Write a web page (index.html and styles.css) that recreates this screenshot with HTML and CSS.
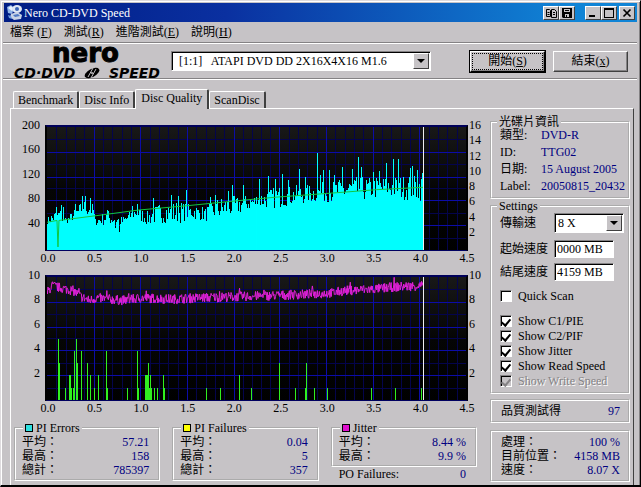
FILE: index.html
```html
<!DOCTYPE html>
<html lang="zh-Hant">
<head>
  <meta charset="UTF-8" />
  <title>Nero CD-DVD Speed</title>
  <link rel="stylesheet" href="styles.css">
</head>
<body>

<div class="window">
  <header class="titlebar">
    <svg class="app-icon" width="17" height="17" viewBox="0 0 17 17">
      <path d="M1 3l4-2 3 3-2 6-4-1z" fill="#8fb4e8"/>
      <path d="M2 4l3-2 2 2-1 3z" fill="#e8f2ff"/>
      <ellipse cx="11" cy="5" rx="5" ry="4" fill="#dfe8f5"/>
      <circle cx="11" cy="5" r="2" fill="#3d66b8"/>
      <path d="M5 10l6-2 5 3-1 4-7 1-4-3z" fill="#c9d4e6"/>
      <path d="M7 11l5-1 2 2-5 1z" fill="#4f79c4"/>
      <path d="M2 11l3 1 1 3-3-1z" fill="#6d9de0"/>
    </svg>
    <span class="title">Nero CD-DVD Speed</span>
    <div class="title-buttons">
      <button class="tb" aria-label="Copy">
        <svg width="11" height="10" viewBox="0 0 11 10" fill="none" stroke="#000">
          <path d="M.5 1.5h3l1 1v6h-4zM5.5 1.5h3l2 2v6h-5zM1.5 4.5h2M1.5 6.5h2M7 4.5h2M7 6.5h2"/>
        </svg>
      </button>
      <button class="tb" aria-label="Save">
        <svg width="10" height="10" viewBox="0 0 10 10">
          <path d="M0 0h10v10H1L0 9z" fill="#000"/>
          <path d="M2 1h6v3H2zM3 6h4v3H3z" fill="#c6c3c6"/>
          <path d="M3 2h4v1H3zM4 7h1v2H4z" fill="#000"/>
        </svg>
      </button>
    </div>
    <div class="title-buttons">
      <button class="tb" aria-label="Minimize">
        <svg width="10" height="10" viewBox="0 0 10 10"><path d="M1 7h6v2H1z"/></svg>
      </button>
      <button class="tb" aria-label="Maximize">
        <svg width="10" height="10" viewBox="0 0 10 10"><path d="M0 0h10v10H0zM1 2v7h8V2z" fill-rule="evenodd"/></svg>
      </button>
      <button class="tb close" aria-label="Close">
        <svg width="10" height="10" viewBox="0 0 10 10"><path d="M1.5 1.5l7 7M8.5 1.5l-7 7" stroke="#000" stroke-width="1.7"/></svg>
      </button>
    </div>
  </header>

  <nav class="menu">
    <a href="#">檔案 (<u>F</u>)</a>
    <a href="#">測試(<u>R</u>)</a>
    <a href="#">進階測試(<u>E</u>)</a>
    <a href="#">說明(<u>H</u>)</a>
  </nav>

  <div class="toolbar">
    <div class="logo">
      <div class="logo-nero">nero</div>
      <div class="logo-speed">
        <span>CD·DVD</span>
        <svg width="18" height="12" viewBox="0 0 18 12">
          <ellipse cx="9" cy="6" rx="8" ry="4" transform="rotate(-28 9 6)" fill="#000"/>
          <path d="M5 10l5-9M8 11l5-9" stroke="#c6c3c6" stroke-width="1"/>
          <circle cx="9" cy="6" r="1" fill="#c6c3c6"/>
        </svg>
        <span>SPEED</span>
      </div>
    </div>
    <div class="combo drive">
      <select aria-label="Drive"><option>[1:1] &nbsp; ATAPI DVD DD 2X16X4X16 M1.6</option></select>
      <span class="arrow"></span>
    </div>
    <div class="actions">
      <button class="btn default"><span>開始(<u>S</u>)</span></button>
      <button class="btn"><span>結束(<u>x</u>)</span></button>
    </div>
  </div>

  <div class="tabs" role="tablist">
    <button class="tab" role="tab">Benchmark</button>
    <button class="tab" role="tab">Disc Info</button>
    <button class="tab active" role="tab" aria-selected="true">Disc Quality</button>
    <button class="tab" role="tab">ScanDisc</button>
  </div>

  <main class="page">
    <section class="left">
      <div class="chart">
        <div class="axis-y axis-left">
          <span>200</span><span>160</span><span>120</span><span>80</span><span>40</span><span></span>
        </div>
        <svg class="plot" id="pie-plot" viewBox="0 0 420 124" preserveAspectRatio="none"></svg>
        <div class="axis-y axis-right">
          <span>16</span><span>14</span><span>12</span><span>10</span><span>8</span><span>6</span><span>4</span><span>2</span><span></span>
        </div>
        <div class="axis-x">
          <span>0.0</span><span>0.5</span><span>1.0</span><span>1.5</span><span>2.0</span><span>2.5</span><span>3.0</span><span>3.5</span><span>4.0</span><span>4.5</span>
        </div>
      </div>

      <div class="chart">
        <div class="axis-y axis-left">
          <span>10</span><span>8</span><span>6</span><span>4</span><span>2</span><span></span>
        </div>
        <svg class="plot" id="pif-plot" viewBox="0 0 420 124" preserveAspectRatio="none"></svg>
        <div class="axis-y axis-right">
          <span>10</span><span>8</span><span>6</span><span>4</span><span>2</span><span></span>
        </div>
        <div class="axis-x">
          <span>0.0</span><span>0.5</span><span>1.0</span><span>1.5</span><span>2.0</span><span>2.5</span><span>3.0</span><span>3.5</span><span>4.0</span><span>4.5</span>
        </div>
      </div>

      <div class="stats">
        <fieldset class="stat">
          <legend><i class="swatch cyan"></i>PI Errors</legend>
          <dl>
            <div><dt>平均：</dt><dd>57.21</dd></div>
            <div><dt>最高：</dt><dd>158</dd></div>
            <div><dt>總計：</dt><dd>785397</dd></div>
          </dl>
        </fieldset>
        <fieldset class="stat">
          <legend><i class="swatch yellow"></i>PI Failures</legend>
          <dl>
            <div><dt>平均：</dt><dd>0.04</dd></div>
            <div><dt>最高：</dt><dd>5</dd></div>
            <div><dt>總計：</dt><dd>357</dd></div>
          </dl>
        </fieldset>
        <div class="jitter">
          <fieldset class="stat">
            <legend><i class="swatch magenta"></i>Jitter</legend>
            <dl>
              <div><dt>平均：</dt><dd>8.44 %</dd></div>
              <div><dt>最高：</dt><dd>9.9 %</dd></div>
            </dl>
          </fieldset>
          <dl class="po">
            <div><dt>PO Failures:</dt><dd>0</dd></div>
          </dl>
        </div>
      </div>
    </section>

    <aside class="right">
      <fieldset class="info">
        <legend>光碟片資訊</legend>
        <dl>
          <dt>類型:</dt><dd>DVD-R</dd>
          <dt>ID:</dt><dd>TTG02</dd>
          <dt>日期:</dt><dd>15 August 2005</dd>
          <dt>Label:</dt><dd>20050815_20432</dd>
        </dl>
      </fieldset>

      <fieldset class="settings">
        <legend>Settings</legend>
        <div class="field">
          <label for="speed">傳輸速</label>
          <div class="combo">
            <select id="speed"><option>8 X</option></select>
            <span class="arrow"></span>
          </div>
        </div>
        <div class="field">
          <label for="start">起始速度</label>
          <input type="text" id="start" value="0000 MB" />
        </div>
        <div class="field">
          <label for="end">結尾速度</label>
          <input type="text" id="end" value="4159 MB" />
        </div>
        <label class="check quick"><input type="checkbox" /> <span>Quick Scan</span></label>
        <label class="check"><input type="checkbox" checked /> <span>Show C1/PIE</span></label>
        <label class="check"><input type="checkbox" checked /> <span>Show C2/PIF</span></label>
        <label class="check"><input type="checkbox" checked /> <span>Show Jitter</span></label>
        <label class="check"><input type="checkbox" checked /> <span>Show Read Speed</span></label>
        <label class="check off"><input type="checkbox" checked disabled /> <span>Show Write Speed</span></label>
      </fieldset>

      <dl class="box score">
        <div><dt>品質測試得</dt><dd>97</dd></div>
      </dl>

      <dl class="box progress">
        <div><dt>處理：</dt><dd>100 %</dd></div>
        <div><dt>目前位置：</dt><dd>4158 MB</dd></div>
        <div><dt>速度：</dt><dd>8.07 X</dd></div>
      </dl>
    </aside>
  </main>
</div>

<script src="charts.js"></script>
</body>
</html>
```

FILE: styles.css
```css
* {
  box-sizing: border-box;
}

body {
  margin: 0;
  background: #c6c3c6;
  color: #000;
  font-family: "Liberation Serif", "Noto Sans CJK TC", serif;
  font-size: 12px;
  line-height: 14px;
}

button, input, select {
  font: inherit;
  color: inherit;
}

dl, dd {
  margin: 0;
}

dd {
  color: #000080;
}

fieldset {
  min-width: 0;
  margin: 0;
  border: 2px groove #fff;
}

legend {
  padding: 0 2px;
  height: 14px;
}

.window {
  min-height: 100vh;
  padding: 2px 3px 0 2px;
  border: 1px solid #dedbde;
  border-right-color: #000;
  border-bottom: 2px solid #000;
  box-shadow: inset 1px 1px #fff, inset -1px 0 #848284;
}

/* Title bar */
.titlebar {
  display: flex;
  align-items: center;
  height: 19px;
  margin-left: 1px;
  padding: 0 2px;
  color: #fff;
  background: linear-gradient(90deg, #001c84, #0a30a0 35%, #1084d6 90%);
}

.title {
  flex: 1;
  margin-left: 1px;
}

.title-buttons {
  display: flex;
  margin-left: 10px;
}

.tb {
  display: flex;
  align-items: center;
  justify-content: center;
  width: 16px;
  height: 14px;
  padding: 0;
  background: #c6c3c6;
  border: 1px solid;
  border-color: #fff #404040 #404040 #fff;
}

.close {
  margin-left: 2px;
}

/* Menu */
.menu {
  display: flex;
  gap: 12px;
  padding: 2px 7px;
  height: 21px;
  line-height: 16px;
  border-bottom: 1px solid #848284;
}

.menu a {
  color: #000;
  text-decoration: none;
}

/* Toolbar */
.toolbar {
  display: flex;
  align-items: center;
  height: 36px;
  padding: 0 9px 0 11px;
  border-top: 1px solid #fff;
  border-bottom: 1px solid #848284;
  box-shadow: 0 1px #fff;
}

.logo {
  width: 146px;
  font-family: "DejaVu Sans", sans-serif;
  font-weight: bold;
}

.logo-nero {
  height: 24px;
  margin-left: 38px;
  font-size: 26px;
  line-height: 20px;
  -webkit-text-stroke: 1px #000;
}

.logo-speed {
  display: flex;
  align-items: center;
  justify-content: space-between;
  font-size: 14px;
  font-style: italic;
  line-height: 12px;
}

.combo {
  display: flex;
  background: #fff;
  border: 1px solid;
  border-color: #848284 #fff #fff #848284;
  box-shadow: inset 1px 1px #000;
  padding: 1px;
  height: 20px;
}

.combo select {
  flex: 1;
  min-width: 0;
  appearance: none;
  border: 0;
  padding: 0 6px;
  background: transparent;
}

.arrow {
  display: flex;
  align-items: center;
  justify-content: center;
  width: 16px;
  background: #c6c3c6;
  border: 1px solid;
  border-color: #fff #404040 #404040 #fff;
}

.arrow::before {
  content: "";
  border: 4px solid transparent;
  border-top-color: #000;
  border-bottom: 0;
}

.drive {
  flex: 1;
  margin-left: 11px;
}

.actions {
  display: flex;
  gap: 8px;
  margin-left: 39px;
}

.btn {
  width: 75px;
  height: 21px;
  padding: 1px;
  background: #c6c3c6;
  border: 1px solid;
  border-color: #fff #404040 #404040 #fff;
  box-shadow: inset -1px -1px #848284;
}

.btn span {
  display: block;
  line-height: 15px;
  border: 1px solid transparent;
}

.btn.default {
  border-color: #fff #000 #000 #fff;
  outline: 1px solid #000;
}

.btn.default span {
  border: 1px dotted #000;
}

/* Tabs */
.tabs {
  display: flex;
  align-items: flex-end;
  height: 29px;
  padding-left: 10px;
}

.tab {
  height: 17px;
  padding: 0 4px;
  background: #c6c3c6;
  border: 1px solid #fff;
  border-right: 2px solid #404040;
  border-bottom: 0;
  border-radius: 2px 2px 0 0;
}

.tab.active {
  height: 20px;
  padding: 0 5px 3px;
  margin-bottom: -1px;
}

.page {
  display: flex;
  gap: 13px;
  margin-left: 7px;
  margin-right: 3px;
  padding: 6px 3px 3px;
  border: 1px solid #fff;
  border-right-color: #404040;
  border-bottom: 0;
}

.left {
  flex: 1;
  min-width: 0;
}

.right {
  width: 140px;
}

/* Charts */
.chart {
  display: grid;
  grid-template-columns: 31px 1fr 9px;
  padding-top: 10px;
}

.plot {
  width: 100%;
  height: 126px;
  background: linear-gradient(#181818, #050505 50%, #000);
  border: 2px solid #000;
  border-top-color: #00005a;
  border-bottom: 1px solid #000060;
}

.axis-y {
  display: flex;
  flex-direction: column;
  justify-content: space-between;
  height: 136px;
  margin: -7px 0 -4px;
}

.axis-y span {
  height: 14px;
}

.axis-left {
  padding-right: 5px;
  text-align: right;
}

.axis-right {
  margin-left: 1px;
}

.axis-x {
  grid-column: 2;
  display: flex;
  justify-content: space-between;
  margin: 0 -14px 0 -12px;
}

.axis-x span {
  width: 30px;
  text-align: center;
}

/* Statistics */
.stats {
  display: grid;
  grid-template-columns: 1fr 1fr 1fr;
  gap: 12px;
  margin-top: 6px;
}

.stat {
  padding: 0 9px 2px 6px;
}

.stat legend {
  margin-left: 1px;
}

.stats dl div, .box div {
  display: flex;
  justify-content: space-between;
}

.swatch {
  display: inline-block;
  width: 8px;
  height: 8px;
  margin-right: 3px;
  border: 1px solid #000;
}

.cyan { background: #2de0e0; }
.yellow { background: #ffff00; }
.magenta { background: #de10ce; }

.po {
  padding: 0 11px 0 8px;
}

/* Right column */
.info {
  padding: 0 2px 4px 8px;
}

.info legend, .settings legend {
  margin-left: -3px;
}

.info dl {
  display: grid;
  grid-template-columns: 41px 1fr;
  row-gap: 3px;
  margin-top: -1px;
  white-space: nowrap;
}

.settings {
  padding: 0 4px 4px 8px;
}

.field {
  display: grid;
  grid-template-columns: 54px 60px;
  align-items: center;
  height: 18px;
  margin-bottom: 5px;
}

.field:first-of-type {
  grid-template-columns: 54px 1fr;
  margin-bottom: 9px;
}

.field .combo select {
  padding: 0 2px;
}

.field input {
  width: 100%;
  height: 18px;
  padding: 0 2px;
  background: #fff;
  border: 1px solid;
  border-color: #848284 #fff #fff #848284;
  box-shadow: inset 1px 1px #000;
}

.check {
  display: flex;
  align-items: center;
  gap: 6px;
  height: 15px;
}

.check.quick {
  margin: 7px 0 10px;
}

.check input {
  appearance: none;
  display: flex;
  justify-content: center;
  width: 12px;
  height: 12px;
  margin: 0;
  background: #fff;
  border: 1px solid;
  border-color: #848284 #fff #fff #848284;
  box-shadow: inset 1px 1px #000;
}

.check input:checked::before {
  content: "";
  width: 4px;
  height: 7px;
  margin-top: 1px;
  border: solid #000;
  border-width: 0 2px 2px 0;
  transform: rotate(40deg);
}

.check.off {
  color: #848284;
  text-shadow: 1px 1px #fff;
}

.check.off input {
  background: #c6c3c6;
}

.check.off input:checked::before {
  border-color: #848284;
}

.box {
  border: 2px groove #fff;
  padding: 3px 8px 3px 9px;
}

.score {
  margin-top: 5px;
}

.progress {
  margin-top: 7px;
}
```

FILE: charts.js
```js
const W = 420;
const H = 124;
const END = 377;

// [x, low, high] range of the PI errors along the disc
const PIE_RANGE = [
  [0, 42, 54], [12, 44, 70], [19, 42, 54], [28, 48, 68], [36, 58, 82], [46, 52, 76],
  [48, 40, 52], [60, 40, 66], [75, 38, 54], [88, 50, 72], [100, 40, 64], [112, 44, 76],
  [130, 42, 80], [142, 50, 76], [158, 46, 70], [170, 48, 86], [190, 56, 88],
  [205, 66, 90], [230, 68, 104], [260, 76, 106], [300, 78, 118], [340, 84, 120], [377, 78, 124]
];

const PIE_PEAKS = {
  9: 70, 14: 73, 16: 70, 28: 75, 35: 88, 38: 88, 43: 84, 60: 65, 68: 35, 72: 30, 85: 72,
  90: 75, 106: 85, 124: 90, 131: 88, 139: 98, 163: 86, 168: 89, 181: 96, 185: 105,
  196: 105, 213: 115, 222: 120, 229: 115, 236: 123, 242: 113, 253: 132, 259: 118,
  271: 157, 274: 122, 277: 130, 283: 130, 288: 122, 296: 135, 306: 132, 312: 152,
  315: 135, 327: 127, 333: 128, 340: 142, 347: 148, 352: 148, 364: 133, 366: 136,
  371: 130, 376: 125
};

const READ_SPEED = [
  [0, 45], [10, 48], [11, 5], [12, 48], [50, 56], [92, 65], [140, 72],
  [190, 80], [230, 86], [290, 93], [330, 98], [377, 102]
];

const JITTER = [
  [0, 8.7], [5, 9.3], [14, 9.1], [26, 8.9], [34, 8.4], [42, 8.1], [50, 8.3], [62, 8.2],
  [76, 8.1], [95, 8.3], [125, 8.2], [150, 8.3], [190, 8.4], [230, 8.5], [260, 8.6],
  [285, 8.7], [300, 8.9], [325, 9], [350, 9.2], [376, 9.3]
];

const PIF = [
  [11, 5], [12, 3], [18, 1], [22, 2], [23, 2], [24, 1], [26, 1], [27, 4], [29, 5], [30, 3],
  [34, 4], [40, 3], [43, 2], [47, 1], [51, 2], [59, 4], [60, 1], [80, 1], [90, 4], [91, 1],
  [98, 2], [99, 2], [100, 2], [101, 3], [102, 1], [103, 2], [104, 1], [107, 1], [110, 1],
  [116, 2], [117, 1], [159, 1], [173, 1], [192, 2], [204, 1], [233, 3], [249, 1], [259, 1],
  [260, 3], [268, 1], [281, 1], [325, 1], [349, 1], [375, 1]
];

let seed = 7;
function rnd() {
  seed = (seed * 16807) % 2147483647;
  return seed / 2147483647;
}

function lerp(points, x, col) {
  let i = 1;
  while (i < points.length - 1 && points[i][0] < x) i++;
  const a = points[i - 1];
  const b = points[i];
  return a[col] + (b[col] - a[col]) * (x - a[0]) / (b[0] - a[0]);
}

function path(d, stroke, crisp) {
  return `<path d="${d}" fill="none" stroke="${stroke}"${crisp ? ' shape-rendering="crispEdges"' : ''}/>`;
}

function grid(rows) {
  let minor = '';
  let major = '';
  for (let i = 1; i < 45; i++) {
    const line = `M${Math.round(i * W / 45) + 0.5} 0V${H}`;
    if (i % 5) minor += line; else major += line;
  }
  for (let i = 1; i < rows * 2; i++) {
    const line = `M0 ${Math.round(i * H / rows / 2) + 0.5}H${W}`;
    if (i % 2) minor += line; else major += line;
  }
  return path(minor, '#04044c', true) + path(major, '#0c0ca8', true);
}

function bars(list, max, color) {
  return path(list.map(([x, v]) => `M${x + 0.5} ${H}V${(H - v * H / max).toFixed(1)}`).join(''), color, true);
}

function line(list, max, color) {
  return path('M' + list.map(([x, v]) => `${x} ${(H - v * H / max).toFixed(1)}`).join('L'), color);
}

const pie = [];
for (let x = 0; x < END; x++) {
  const low = lerp(PIE_RANGE, x, 1);
  const high = lerp(PIE_RANGE, x, 2);
  pie.push([x, PIE_PEAKS[x] || low + (high - low) * rnd()]);
}

const jitter = [];
for (let x = 0; x < END; x += 0.5) {
  const spike = rnd() > 0.97 ? 0.4 : 0;
  jitter.push([x, lerp(JITTER, x, 1) + (rnd() - 0.5) * 0.8 + spike]);
}

const cursor = path(`M${END + 0.5} 0V${H}`, '#f0f0f0', true);

document.getElementById('pie-plot').innerHTML =
  grid(5) + bars(pie, 200, '#00ffff') + line(READ_SPEED, 200, '#10c840') + cursor;

document.getElementById('pif-plot').innerHTML =
  grid(5) + bars(PIF, 10, '#30f020') + line(jitter, 10, '#e020d8') + cursor;
```
